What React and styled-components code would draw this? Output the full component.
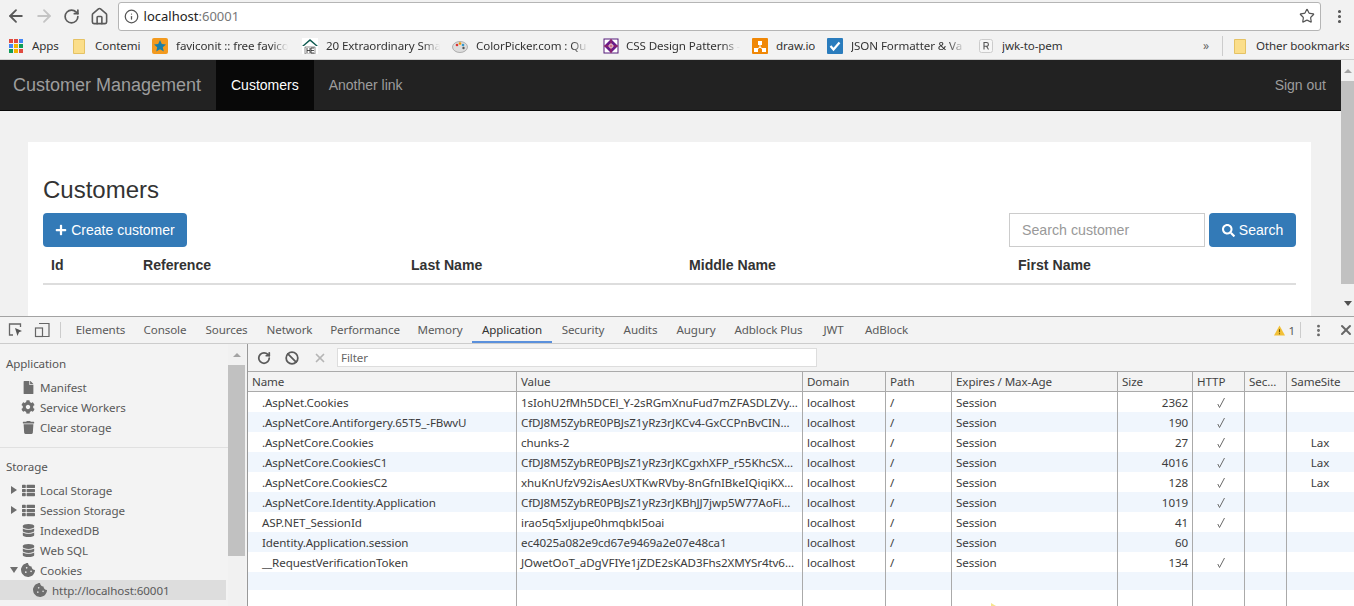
import React from 'react';
import styled, { createGlobalStyle } from 'styled-components';
import { ArrowLeft, ArrowRight, RotateCw, Home, Info, Star, MoreVertical, X, Ban } from 'lucide-react';
import { FaFile, FaCog, FaTrash, FaThList, FaDatabase, FaCookieBite, FaPlus, FaSearch } from 'react-icons/fa';

const Global = createGlobalStyle`
  html, body { margin: 0; padding: 0; height: 606px; overflow: hidden; background: #fff; }
  * { box-sizing: border-box; }
`;
const Shell = styled.div`width:1354px;height:606px;display:flex;flex-direction:column;overflow:hidden;font-family:"Liberation Sans",Arial,sans-serif;`;

/* browser chrome */
const Toolbar = styled.div`height:32px;background:#f2f2f2;display:flex;align-items:center;padding-left:2px;flex:none;`;
const NavBtn = styled.div`width:28px;height:28px;display:flex;align-items:center;justify-content:center;color:${p=>p.$off?'#c4c4c4':'#5a5a5a'};`;
const Omnibox = styled.div`width:1208px;height:29px;margin-left:4px;background:#fff;border:1px solid #b5b5b5;border-radius:3px;display:flex;align-items:center;padding:0 5px;color:#555;`;
const Url = styled.span`font:13px "Noto Sans",sans-serif;color:#222;margin-left:5px;flex:1;`;
const Port = styled.span`color:#777;`;
const MenuBtn = styled.div`width:30px;display:flex;justify-content:center;color:#555;margin-left:3px;`;
const Bookmarks = styled.div`height:28px;background:#f2f2f2;border-bottom:1px solid #cfcfcf;display:flex;align-items:center;padding-left:8px;flex:none;font:11.600px "Noto Sans",sans-serif;letter-spacing:-0.1px;color:#333;`;
const Bm = styled.div`display:flex;align-items:center;flex:none;gap:${p=>p.$gap??8}px;margin-right:${p=>p.$mr??14}px;`;
const BmLabel = styled.span`display:block;white-space:nowrap;overflow:hidden;width:${p=>p.$w}px;${p=>p.$fade?'-webkit-mask-image:linear-gradient(90deg,#000 85%,transparent);mask-image:linear-gradient(90deg,#000 85%,transparent);':''}`;
const Chev = styled.span`margin-left:139px;font-size:12px;color:#666;width:19px;flex:none;`;
const BmSep = styled.div`width:1px;height:20px;background:#ccc;margin-right:11px;flex:none;`;

const Folder = () => <svg width="12" height="16" viewBox="0 0 12 16"><path d="M.5 1.5h11v14H.5z" fill="#fbde8a" stroke="#e5c264"/></svg>;
const AppsIcon = () => <svg width="16" height="16" viewBox="0 0 16 16">{[['#e04a3f','#e04a3f','#4285f4'],['#4285f4','#f4b400','#0f9d58'],['#0f9d58','#f4b400','#e04a3f']].map((r,i)=>r.map((c,j)=><rect key={i+'-'+j} x={1+j*5} y={1+i*5} width="4" height="4" fill={c}/>))}</svg>;
const StarFav = () => <svg width="16" height="16" viewBox="0 0 16 16"><rect width="16" height="16" rx="2" fill="#f39a1e"/><path d="M8 2l1.800 4 4.200.4-3.200 2.800 1 4.200L8 11.200 4.200 13.400l1-4.200L2 6.400 6.200 6z" fill="#1a7fa8"/></svg>;
const HomeFav = () => <svg width="16" height="16" viewBox="0 0 16 16"><rect width="16" height="16" fill="#fff"/><path d="M0 8L8 1l8 7h-2L8 3 2 8z" fill="#0e5a50"/><path d="M3 9h10v7H3z" fill="#fff" stroke="#444" strokeWidth=".6"/><path d="M5 10v5M8 10v5M5 12.500h3M9 10h3M9 12.500h3M9 15h3M9 10v5" stroke="#222" strokeWidth=".8" fill="none"/></svg>;
const PickerFav = () => <svg width="16" height="16" viewBox="0 0 16 16"><ellipse cx="8" cy="9" rx="7.500" ry="5.500" fill="#ddd" stroke="#888" strokeWidth=".6"/><circle cx="5" cy="7" r="1.300" fill="#d33"/><circle cx="8" cy="5.500" r="1.300" fill="#e90"/><circle cx="11" cy="7" r="1.300" fill="#39c"/><circle cx="11.500" cy="10" r="1.200" fill="#555"/></svg>;
const CssFav = () => <svg width="16" height="16" viewBox="0 0 16 16"><rect x="1" y="1" width="14" height="14" fill="#fff" stroke="#551a7a"/><path d="M8 1l7 7-7 7-7-7z" fill="#6a1b8a"/><path d="M8 5l3 3-3 3-3-3z" fill="#fff"/><path d="M1 8h14M8 1v14" stroke="#b02a4a" strokeWidth=".8"/></svg>;
const DrawFav = () => <svg width="16" height="16" viewBox="0 0 16 16"><rect width="16" height="16" rx="1" fill="#f08705"/><path d="M8 6v3M8 9l-4 3M8 9l4 3" stroke="#fff" strokeWidth="1"/><rect x="6" y="3" width="4" height="4" fill="#fff"/><rect x="2" y="10" width="4" height="4" fill="#fff"/><rect x="10" y="10" width="4" height="4" fill="#fff"/></svg>;
const JsonFav = () => <svg width="16" height="16" viewBox="0 0 16 16"><rect width="16" height="16" rx="1" fill="#2a7cbd"/><path d="M3.500 8l3 3.500 6-7" stroke="#fff" strokeWidth="2.200" fill="none"/></svg>;
const RFav = () => <svg width="14" height="14" viewBox="0 0 14 14"><rect x=".5" y=".5" width="13" height="13" rx="2" fill="#f6f6f6" stroke="#ccc"/><path d="M5 10.500V3.500h2.500a1.800 1.800 0 0 1 0 3.800H5M7.500 7.300l2 3.200" stroke="#555" strokeWidth="1.100" fill="none"/></svg>;
const CheckMark = () => <svg width="10" height="12" viewBox="0 0 10 12" style={{verticalAlign:'-2px'}}><path d="M1.800 7l1.700 3.500L8.500 1" stroke="#6a6a6a" strokeWidth="1" fill="none"/></svg>;

/* page */
const Viewport = styled.div`height:256px;display:flex;flex:none;overflow:hidden;`;
const PageArea = styled.div`width:1341px;background:#f1f1f1;display:flex;flex-direction:column;`;
const TopNav = styled.nav`height:51px;flex:none;background:#222;border-bottom:1px solid #080808;display:flex;font-size:14px;color:#9d9d9d;`;
const Brand = styled.div`width:216px;padding-left:13px;font-size:18px;line-height:50px;white-space:nowrap;`;
const NavItem = styled.div`padding:0 15px;line-height:50px;white-space:nowrap;background:${p=>p.$active?'#080808':'transparent'};color:${p=>p.$active?'#fff':'inherit'};`;
const NavRight = styled.div`margin-left:auto;padding-right:15px;line-height:50px;`;
const Card = styled.section`margin:31px 30px 0 28px;padding:34px 15px 0;background:#fff;flex:1;`;
const Title = styled.h1`margin:0;font-size:24px;font-weight:400;line-height:28px;color:#333;`;
const Actions = styled.div`display:flex;margin-top:9px;align-items:stretch;height:34px;`;
const PrimaryBtn = styled.div`background:#337ab7;color:#fff;border-radius:4px;font-size:14px;display:flex;align-items:center;justify-content:center;gap:4px;width:${p=>p.$w}px;white-space:nowrap;margin-left:${p=>p.$ml||0}px;`;
const SearchInput = styled.div`margin-left:auto;width:196px;border:1px solid #ccc;color:#999;font-size:14.200px;display:flex;align-items:center;padding-left:12px;`;
const HeadRow = styled.div`display:grid;grid-template-columns:92px 268px 278px 329px 286px;border-bottom:2px solid #ddd;height:38px;font-size:14.100px;font-weight:700;color:#333;align-items:center;`;
const HeadCell = styled.div`padding-left:8px;`;

const Scrollbar = styled.div`width:${p=>p.$w}px;background:#f1f1f1;display:flex;flex-direction:column;align-items:center;flex:none;`;
const ScrollThumb = styled.div`background:#c1c1c1;width:100%;height:${p=>p.$h}px;margin:${p=>p.$top}px 0 0;`;
const ArrowUp = styled.div`width:0;height:0;border:4px solid transparent;border-top:0;border-bottom:4px solid #a3a3a3;margin-top:${p=>p.$top}px;`;
const ArrowDown = styled.div`width:0;height:0;border:4px solid transparent;border-bottom:0;border-top:5px solid #505050;margin-top:${p=>p.$top}px;`;

/* devtools */
const Dev = styled.div`flex:1;min-height:0;display:flex;flex-direction:column;border-top:1px solid #a3a3a3;background:#f3f3f3;font:11.600px "Noto Sans",sans-serif;letter-spacing:-0.1px;color:#333;`;
const DevTabs = styled.div`height:27px;flex:none;display:flex;align-items:center;border-bottom:1px solid #ccc;background:#f3f3f3;padding-left:8px;`;
const DevSep = styled.div`width:1px;height:16px;background:#ccc;margin:0 ${p=>p.$r}px 0 ${p=>p.$l}px;`;
const DevIcon = styled.div`display:flex;color:#5a5a5a;margin-right:${p=>p.$mr||0}px;`;
const Tab = styled.div`height:26px;line-height:26px;width:${p=>p.$w}px;flex:none;text-align:center;white-space:nowrap;color:${p=>p.$active?'#333':'#5a5a5a'};box-shadow:${p=>p.$active?'inset 0 -2px 0 #5a90dc':'none'};`;
const DevRight = styled.div`margin-left:auto;display:flex;align-items:center;color:#5a5a5a;`;
const Count = styled.span`margin-left:3px;`;
const CloseBtn = styled.div`width:16px;margin-left:12px;display:flex;justify-content:center;color:#666;`;
const DevBody = styled.div`flex:1;display:flex;min-height:0;`;
const Sidebar = styled.aside`width:248px;flex:none;border-right:1px solid #999;display:flex;overflow:hidden;`;
const Tree = styled.div`width:228px;flex:none;`;
const TreeHead = styled.div`height:20px;line-height:20px;padding-left:6px;color:#555;margin-top:${p=>p.$top||0}px;`;
const TreeRow = styled.div`height:20px;display:flex;align-items:center;position:relative;padding-left:${p=>p.$pad||18}px;color:#5a5a5a;white-space:nowrap;margin-top:${p=>p.$top||0}px;background:${p=>p.$sel?'#ddd':'transparent'};margin-right:2px;`;
const TreeIcon = styled.span`width:20px;margin-right:2px;display:flex;justify-content:center;color:#6e6e6e;flex:none;`;
const Caret = styled.span`position:absolute;left:${p=>p.$left||11}px;width:0;height:0;${p=>p.$open
  ?'border-left:4px solid transparent;border-right:4px solid transparent;border-top:6px solid #6e6e6e;'
  :'border-top:4px solid transparent;border-bottom:4px solid transparent;border-left:6px solid #6e6e6e;'}`;
const TreeDivider = styled.div`height:1px;background:#e0e0e0;margin-top:10px;`;
const Main = styled.main`flex:1;min-width:0;display:flex;flex-direction:column;`;
const Filterbar = styled.div`height:27px;flex:none;display:flex;align-items:center;padding-left:2px;background:#f3f3f3;`;
const FilterIcon = styled.div`width:28px;display:flex;justify-content:center;color:${p=>p.$off?'#b5b5b5':'#5a5a5a'};`;
const FilterInput = styled.div`width:480px;height:19px;margin-left:3px;background:#fff;border:1px solid #ddd;color:#666;padding-left:3px;line-height:17px;`;
const cols = '269px 286px 83px 66px 166px 75px 52px 42px 1fr';
const GridRow = styled.div`display:grid;grid-template-columns:${cols};height:${p=>p.$h||20}px;flex:none;background:${p=>p.$alt?'#f0f6fd':'#fff'};`;
const FillRow = styled(GridRow)`flex:1;height:auto;position:relative;`;
const HeaderRow = styled(GridRow)`height:21px;background:#f3f3f3;border-top:1px solid #aaa;border-bottom:1px solid #aaa;`;
const Th = styled.div`padding-left:4px;line-height:19px;white-space:nowrap;overflow:hidden;border-right:${p=>p.$last?'0':'1px solid #aaa'};color:#444;`;
const Td = styled.div`padding:0 ${p=>p.$right?'4px':p.$last?'5px':'0'} 0 ${p=>p.$name?'14px':'4px'};line-height:22px;white-space:nowrap;overflow:hidden;border-right:${p=>p.$last?'0':'1px solid #aaa'};text-align:${p=>p.$right?'right':p.$center?'center':'left'};color:#3c3c3c;`;
const Speck = styled.span`position:absolute;left:743px;bottom:0;width:0;height:0;border-left:5px solid #f6e58d;border-top:3px solid transparent;`;

const rows = [
  ['.AspNet.Cookies','1sIohU2fMh5DCEl_Y-2sRGmXnuFud7mZFASDLZVy...','2362',1,''],
  ['.AspNetCore.Antiforgery.65T5_-FBwvU','CfDJ8M5ZybRE0PBJsZ1yRz3rJKCv4-GxCCPnBvCIN...','190',1,''],
  ['.AspNetCore.Cookies','chunks-2','27',1,'Lax'],
  ['.AspNetCore.CookiesC1','CfDJ8M5ZybRE0PBJsZ1yRz3rJKCgxhXFP_r55KhcSX...','4016',1,'Lax'],
  ['.AspNetCore.CookiesC2','xhuKnUfzV92isAesUXTKwRVby-8nGfnIBkeIQiqiKX...','128',1,'Lax'],
  ['.AspNetCore.Identity.Application','CfDJ8M5ZybRE0PBJsZ1yRz3rJKBhJJ7jwp5W77AoFi...','1019',1,''],
  ['ASP.NET_SessionId','irao5q5xljupe0hmqbkl5oai','41',1,''],
  ['Identity.Application.session','ec4025a082e9cd67e9469a2e07e48ca1','60',0,''],
  ['__RequestVerificationToken','JOwetOoT_aDgVFIYe1jZDE2sKAD3Fhs2XMYSr4tv6...','134',1,''],
];
const tabs = [['Elements',67],['Console',62],['Sources',61],['Network',65],['Performance',86],['Memory',64],['Application',80],['Security',62],['Audits',53],['Augury',58],['Adblock Plus',87],['JWT',43],['AdBlock',63]];
const heads = ['Name','Value','Domain','Path','Expires / Max-Age','Size','HTTP','Sec...','SameSite'];
const EmptyCells = () => Array.from({length:9}).map((_,i)=><Td key={i} $last={i===8}/>);

export default function App() {
  return (
    <Shell>
      <Global />
      <Toolbar>
        <NavBtn><ArrowLeft size={20} strokeWidth={2.2}/></NavBtn>
        <NavBtn $off><ArrowRight size={20} strokeWidth={2.2}/></NavBtn>
        <NavBtn><RotateCw size={17} strokeWidth={2.4}/></NavBtn>
        <NavBtn><Home size={19} strokeWidth={2}/></NavBtn>
        <Omnibox>
          <Info size={15}/>
          <Url>localhost<Port>:60001</Port></Url>
          <Star size={16} strokeWidth={1.8}/>
        </Omnibox>
        <MenuBtn><MoreVertical size={17} strokeWidth={2.4}/></MenuBtn>
      </Toolbar>
      <Bookmarks>
        <Bm><AppsIcon/><BmLabel $w={27}>Apps</BmLabel></Bm>
        <Bm $gap={10} $mr={12}><Folder/><BmLabel $w={45}>Contemi</BmLabel></Bm>
        <Bm $mr={14}><StarFav/><BmLabel $w={112} $fade>faviconit :: free favico</BmLabel></Bm>
        <Bm $mr={12}><HomeFav/><BmLabel $w={114} $fade>20 Extraordinary Sma</BmLabel></Bm>
        <Bm $mr={15}><PickerFav/><BmLabel $w={112} $fade>ColorPicker.com : Qu</BmLabel></Bm>
        <Bm $gap={7} $mr={12}><CssFav/><BmLabel $w={114} $fade>CSS Design Patterns -</BmLabel></Bm>
        <Bm $gap={8} $mr={12}><DrawFav/><BmLabel $w={39}>draw.io</BmLabel></Bm>
        <Bm $gap={8} $mr={14}><JsonFav/><BmLabel $w={114} $fade>JSON Formatter &amp; Va</BmLabel></Bm>
        <Bm $gap={9} $mr={0}><RFav/><BmLabel $w={62}>jwk-to-pem</BmLabel></Bm>
        <Chev>»</Chev>
        <BmSep/>
        <Bm $gap={10} $mr={0}><Folder/><BmLabel $w={93}>Other bookmarks</BmLabel></Bm>
      </Bookmarks>
      <Viewport>
        <PageArea>
          <TopNav>
            <Brand>Customer Management</Brand>
            <NavItem $active>Customers</NavItem>
            <NavItem>Another link</NavItem>
            <NavRight>Sign out</NavRight>
          </TopNav>
          <Card>
            <Title>Customers</Title>
            <Actions>
              <PrimaryBtn $w={144}><FaPlus size={12}/>Create customer</PrimaryBtn>
              <SearchInput>Search customer</SearchInput>
              <PrimaryBtn $w={87} $ml={4}><FaSearch size={13}/>Search</PrimaryBtn>
            </Actions>
            <HeadRow>
              <HeadCell>Id</HeadCell><HeadCell>Reference</HeadCell><HeadCell>Last Name</HeadCell><HeadCell>Middle Name</HeadCell><HeadCell>First Name</HeadCell>
            </HeadRow>
          </Card>
        </PageArea>
        <Scrollbar $w={13}>
          <ArrowUp $top={9}/>
          <ScrollThumb $top={8} $h={203}/>
          <ArrowDown $top={17}/>
        </Scrollbar>
      </Viewport>
      <Dev>
        <DevTabs>
          <DevIcon $mr={10}>
            <svg width="16" height="16" viewBox="0 0 16 16" fill="none"><path d="M12.500 5V2H1.500v11H5" stroke="#666" strokeWidth="1.300"/><path d="M7 6l7 3-3 1.300L9.500 14z" fill="#555"/></svg>
          </DevIcon>
          <DevIcon>
            <svg width="16" height="16" viewBox="0 0 16 16" fill="none"><path d="M5 1.500h10v13H9" stroke="#666" strokeWidth="1.200"/><rect x="1.500" y="6" width="7" height="8.500" stroke="#666" strokeWidth="1.200"/></svg>
          </DevIcon>
          <DevSep $l={10} $r={6}/>
          {tabs.map(([t,w])=><Tab key={t} $w={w} $active={t==='Application'}>{t}</Tab>)}
          <DevRight>
            <svg width="11" height="11" viewBox="0 0 12 11"><path d="M6 0l6 11H0z" fill="#f2c037"/><path d="M6 4v3.500M6 8.500v1.200" stroke="#6a5200" strokeWidth="1.200"/></svg>
            <Count>1</Count>
            <DevSep $l={5} $r={10}/>
            <MoreVertical size={15} strokeWidth={2.6} color="#666"/>
            <CloseBtn><X size={16} strokeWidth={3}/></CloseBtn>
          </DevRight>
        </DevTabs>
        <DevBody>
          <Sidebar>
            <Tree>
              <TreeHead $top={10}>Application</TreeHead>
              <TreeRow $top={3}><TreeIcon><FaFile size={13}/></TreeIcon>Manifest</TreeRow>
              <TreeRow><TreeIcon><FaCog size={14}/></TreeIcon>Service Workers</TreeRow>
              <TreeRow><TreeIcon><FaTrash size={13}/></TreeIcon>Clear storage</TreeRow>
              <TreeDivider/>
              <TreeHead $top={9}>Storage</TreeHead>
              <TreeRow $top={3}><Caret/><TreeIcon><FaThList size={13}/></TreeIcon>Local Storage</TreeRow>
              <TreeRow><Caret/><TreeIcon><FaThList size={13}/></TreeIcon>Session Storage</TreeRow>
              <TreeRow><TreeIcon><FaDatabase size={13}/></TreeIcon>IndexedDB</TreeRow>
              <TreeRow><TreeIcon><FaDatabase size={13}/></TreeIcon>Web SQL</TreeRow>
              <TreeRow><Caret $open $left={10}/><TreeIcon><FaCookieBite size={14}/></TreeIcon>Cookies</TreeRow>
              <TreeRow $sel $pad={30}><TreeIcon><FaCookieBite size={14}/></TreeIcon>http://localhost:60001</TreeRow>
            </Tree>
            <Scrollbar $w={17}>
              <ArrowUp $top={9}/>
              <ScrollThumb $top={8} $h={191}/>
            </Scrollbar>
          </Sidebar>
          <Main>
            <Filterbar>
              <FilterIcon><RotateCw size={14} strokeWidth={3}/></FilterIcon>
              <FilterIcon><Ban size={14} strokeWidth={3}/></FilterIcon>
              <FilterIcon $off><X size={14} strokeWidth={3}/></FilterIcon>
              <FilterInput>Filter</FilterInput>
            </Filterbar>
            <HeaderRow>{heads.map((h,i)=><Th key={h} $last={i===8}>{h}</Th>)}</HeaderRow>
            {rows.map((r,i)=>(
              <GridRow key={r[0]} $alt={i%2===1}>
                <Td $name>{r[0]}</Td>
                <Td>{r[1]}</Td>
                <Td>localhost</Td>
                <Td>/</Td>
                <Td>Session</Td>
                <Td $right>{r[2]}</Td>
                <Td $center>{r[3]?<CheckMark/>:''}</Td>
                <Td/>
                <Td $center $last>{r[4]}</Td>
              </GridRow>
            ))}
            <GridRow $alt $h={18}><EmptyCells/></GridRow>
            <FillRow><EmptyCells/><Speck/></FillRow>
          </Main>
        </DevBody>
      </Dev>
    </Shell>
  );
}
